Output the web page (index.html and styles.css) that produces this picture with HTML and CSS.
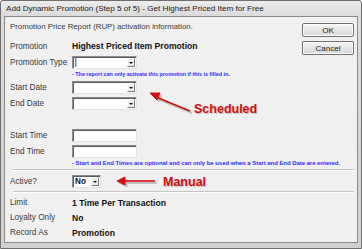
FILE: index.html
```html
<!DOCTYPE html>
<html lang="en">
<head>
  <meta charset="UTF-8">
  <meta name="viewport" content="width=device-width, initial-scale=1.0">
  <title>Add Dynamic Promotion</title>
  <link rel="stylesheet" href="styles.css">
</head>
<body>
  <div class="window">
    <div class="titlebar">Add Dynamic Promotion (Step 5 of 5) - Get Highest Priced Item for Free</div>
    <div class="content">
      <div class="buttons">
        <button class="btn">OK</button>
        <button class="btn">Cancel</button>
      </div>
      <p class="intro">Promotion Price Report (RUP) activation information.</p>

      <div class="row first">
        <span class="label">Promotion</span>
        <span class="value">Highest Priced Item Promotion</span>
      </div>
      <div class="row">
        <span class="label">Promotion Type</span>
        <span class="combo focused"><span class="combo-text"><i class="caret"></i></span><span class="drop"></span></span>
      </div>
      <div class="note">- The report can only activate this promotion if this is filled in.</div>

      <div class="row spaced">
        <span class="label">Start Date</span>
        <span class="combo"><span class="combo-text"></span><span class="drop"></span></span>
      </div>
      <div class="row">
        <span class="label">End Date</span>
        <span class="combo"><span class="combo-text"></span><span class="drop"></span></span>
      </div>

      <div class="row gap">
        <span class="label">Start Time</span>
        <span class="textbox"></span>
      </div>
      <div class="row">
        <span class="label">End Time</span>
        <span class="textbox"></span>
      </div>
      <div class="note wide">- Start and End Times are optional and can only be used when a Start and End Date are entered.</div>

      <div class="separator"></div>
      <div class="row">
        <span class="label">Active?</span>
        <span class="combo small"><span class="combo-text">No</span><span class="drop"></span></span>
      </div>
      <div class="separator"></div>

      <div class="row info">
        <span class="label">Limit</span>
        <span class="value">1 Time Per Transaction</span>
      </div>
      <div class="row info">
        <span class="label">Loyalty Only</span>
        <span class="value">No</span>
      </div>
      <div class="row info">
        <span class="label">Record As</span>
        <span class="value">Promotion</span>
      </div>
    </div>

    <!-- red annotations drawn over the dialog -->
    <svg class="arrows" width="362" height="249" viewBox="0 0 362 249">
      <g fill="#8a8a8a" stroke="#8a8a8a" opacity="0.45">
        <line x1="192" y1="113" x2="158" y2="99" stroke-width="2"/>
        <polygon points="153,96 162,95 159,102"/>
        <line x1="157" y1="183" x2="125" y2="183" stroke-width="2"/>
        <polygon points="119,183 127,179 127,187"/>
      </g>
      <g fill="#d01010" stroke="#d01010">
        <line x1="190" y1="111" x2="156" y2="97" stroke-width="1.6"/>
        <polygon points="150,93 160,93 157,100"/>
        <line x1="155" y1="181" x2="123" y2="181" stroke-width="1.6"/>
        <polygon points="117,181 125,177 125,185"/>
      </g>
    </svg>
    <span class="callout scheduled">Scheduled</span>
    <span class="callout manual">Manual</span>
  </div>
</body>
</html>
```

FILE: styles.css
```css
body {
  margin: 0;
  background: #ffffff;
  font-family: "Liberation Sans", Arial, sans-serif;
}
.window {
  position: relative;
  width: 362px;
  height: 249px;
  box-sizing: border-box;
  border: 1px solid #6f6f6f;
  border-radius: 3px 3px 0 0;
  background: linear-gradient(to bottom, #ececec, #dcdcdc 14px, #d0d0d0);
  padding: 0 3px 5px 3px;
  display: flex;
  flex-direction: column;
}
.titlebar {
  height: 15px;
  line-height: 15px;
  padding-left: 2px;
  font-size: 8.1px;
  color: #222;
  white-space: nowrap;
}
.content {
  flex: 1;
  border: 1px solid #8a8a8a;
  background: #f0f0f0;
  padding: 5px 3px 0 5px;
  color: #3a3a3a;
  font-size: 8.2px;
}
.buttons {
  float: right;
  margin-top: 1px;
  display: flex;
  flex-direction: column;
  gap: 4px;
}
.btn {
  width: 52px;
  height: 14px;
  padding: 0;
  font-family: "Liberation Sans", Arial, sans-serif;
  font-size: 8px;
  color: #222;
  background: linear-gradient(to bottom, #f6f6f6, #e4e4e4 50%, #d9d9d9);
  border: 1px solid #707070;
  border-radius: 2px;
  box-shadow: inset 0 0 0 1px #fbfbfb;
}
.intro {
  margin: 0;
  line-height: 10px;
  font-size: 7.8px;
}
.row {
  display: flex;
  align-items: center;
  height: 16px;
}
.row.first {
  margin-top: 6px;
}
.row.spaced {
  margin-top: 1px;
}
.row.gap {
  margin-top: 16px;
}
.row.info {
  height: 15px;
}
.label {
  width: 62px;
  flex: none;
}
.value {
  font-weight: bold;
  font-size: 8.6px;
  color: #111;
}
.note {
  padding-left: 62px;
  height: 8px;
  line-height: 8px;
  font-size: 5.4px;
  font-weight: bold;
  color: #2b2bff;
  white-space: nowrap;
}
.note.wide {
  font-size: 5.9px;
}
.combo,
.textbox {
  display: flex;
  width: 65px;
  height: 13px;
  box-sizing: border-box;
  background: #fff;
  border: 1px solid;
  border-color: #8d8d8d #e2e2e2 #e2e2e2 #8d8d8d;
  box-shadow: inset 1px 1px 0 #5c5c5c;
}
.combo.small {
  width: 29px;
}
.combo-text {
  flex: 1;
  padding-left: 2px;
  line-height: 11px;
  font-weight: bold;
  color: #111;
}
.caret {
  display: inline-block;
  width: 1px;
  height: 9px;
  margin-top: 1px;
  background: #3a8ee6;
  box-shadow: 1px 0 0 #a9ccf2;
}
.drop {
  position: relative;
  width: 8px;
  margin: 1px 1px 1px 0;
  background: #ececec;
  border: 1px solid;
  border-color: #fafafa #7a7a7a #7a7a7a #fafafa;
  box-sizing: border-box;
}
.drop::after {
  content: "";
  position: absolute;
  left: 1px;
  top: 3px;
  border-left: 2px solid transparent;
  border-right: 2px solid transparent;
  border-top: 2px solid #111;
}
.separator {
  margin: 2px 0 2px 3px;
  border-top: 1px solid #c4c4c4;
  border-bottom: 1px solid #ffffff;
}
.arrows {
  position: absolute;
  left: -1px;
  top: -1px;
}
.callout {
  position: absolute;
  font-size: 12.5px;
  font-weight: bold;
  color: #d01010;
  line-height: 14px;
  text-shadow: 1px 1px 1px rgba(0, 0, 0, 0.2);
}
.scheduled {
  left: 193px;
  top: 101px;
}
.manual {
  left: 162px;
  top: 174px;
}
```
